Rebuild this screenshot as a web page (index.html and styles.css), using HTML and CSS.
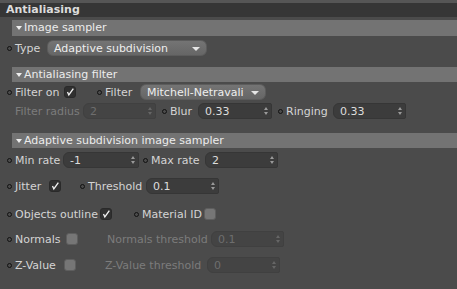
FILE: index.html
```html
<!DOCTYPE html>
<html lang="en">
<head>
  <meta charset="UTF-8" />
  <title>Antialiasing</title>
  <link rel="stylesheet" href="styles.css">
</head>
<body>
  <div class="panel">
    <div class="title">Antialiasing</div>

    <div class="group g-first"><span class="tri"></span>Image sampler</div>
    <div class="row r-type">
      <span class="param w40"><i class="dot"></i>Type</span>
      <span class="select w160">Adaptive subdivision<b class="arrow"></b></span>
    </div>

    <div class="group g-filter"><span class="tri"></span>Antialiasing filter</div>
    <div class="row r-filter">
      <span class="param w57"><i class="dot"></i>Filter on</span>
      <span class="check on"><svg viewBox="0 0 12 12"><path d="M3 6 L4.6 9.5 L10 2" /></svg></span>
      <span class="param w43 ml21"><i class="dot"></i>Filter</span>
      <span class="select w126">Mitchell-Netravali<b class="arrow"></b></span>
    </div>
    <div class="row r-radius">
      <span class="param w76 off"><i class="nodot"></i>Filter radius</span>
      <span class="field w73 dim">2<b class="spin"></b></span>
      <span class="param w36 ml6"><i class="dot"></i>Blur</span>
      <span class="field w74">0.33<b class="spin"></b></span>
      <span class="param w55 ml6"><i class="dot"></i>Ringing</span>
      <span class="field w73">0.33<b class="spin"></b></span>
    </div>

    <div class="group g-adaptive"><span class="tri"></span>Adaptive subdivision image sampler</div>
    <div class="row r-rate">
      <span class="param w56"><i class="dot"></i>Min rate</span>
      <span class="field w76">-1<b class="spin"></b></span>
      <span class="param w62 ml4"><i class="dot"></i>Max rate</span>
      <span class="field w73">2<b class="spin"></b></span>
    </div>
    <div class="row r-jitter">
      <span class="param w42"><i class="dot"></i>Jitter</span>
      <span class="check on"><svg viewBox="0 0 12 12"><path d="M3 6 L4.6 9.5 L10 2" /></svg></span>
      <span class="param w66 ml19"><i class="dot"></i>Threshold</span>
      <span class="field w73">0.1<b class="spin"></b></span>
    </div>
    <div class="row r-outline">
      <span class="param w93"><i class="dot"></i>Objects outline</span>
      <span class="check on"><svg viewBox="0 0 12 12"><path d="M3 6 L4.6 9.5 L10 2" /></svg></span>
      <span class="param w70 ml22"><i class="dot"></i>Material ID</span>
      <span class="check"></span>
    </div>
    <div class="row r-normals">
      <span class="param w59"><i class="dot"></i>Normals</span>
      <span class="check"></span>
      <span class="param w104 ml29 off">Normals threshold</span>
      <span class="field w73 dim">0.1<b class="spin"></b></span>
    </div>
    <div class="row r-zvalue">
      <span class="param w57"><i class="dot"></i>Z-Value</span>
      <span class="check"></span>
      <span class="param w102 ml29 off">Z-Value threshold</span>
      <span class="field w73 dim">0<b class="spin"></b></span>
    </div>
  </div>
</body>
</html>
```

FILE: styles.css
```css
body {
  margin: 0;
  background-color: #4b4b4b;
  font-family: 'DejaVu Sans', sans-serif;
  font-size: 11px;
  color: #d4d4d4;
}

.panel {
  width: 457px;
  height: 289px;
  box-sizing: border-box;
  background-color: #4b4b4b;
  border-top: 3px solid #565656;
}

.title {
  height: 14px;
  line-height: 14px;
  background-color: #363636;
  padding-left: 6px;
  font-weight: bold;
  color: #dcdcdc;
}

.group {
  height: 16px;
  line-height: 16px;
  margin-left: 12px;
  background-color: #737373;
  color: #ececec;
  display: flex;
  align-items: center;
}

.g-first { margin-top: 3px; }
.g-filter { margin-top: 11px; height: 15px; }
.g-adaptive { margin-top: 14px; height: 15px; }

.tri {
  width: 0;
  height: 0;
  margin: 0 2px 0 4px;
  border-left: 3px solid transparent;
  border-right: 3px solid transparent;
  border-top: 4px solid #eeeeee;
}

.row {
  height: 16px;
  padding-left: 7px;
  display: flex;
  align-items: center;
}

.r-type { margin-top: 4px; }
.r-filter { margin-top: 2px; }
.r-radius { margin-top: 3px; }
.r-rate { margin-top: 4px; }
.r-jitter { margin-top: 10px; }
.r-outline { margin-top: 12px; }
.r-normals { margin-top: 9px; }
.r-zvalue { margin-top: 10px; }

.param {
  display: flex;
  align-items: center;
  flex-shrink: 0;
  white-space: nowrap;
}

.param.off { color: #7c7c7c; }

.dot {
  width: 3px;
  height: 3px;
  border: 1px solid #111;
  border-radius: 50%;
  margin-right: 3px;
  flex-shrink: 0;
}

.nodot {
  width: 8px;
  flex-shrink: 0;
}

.select {
  position: relative;
  height: 16px;
  line-height: 16px;
  box-sizing: border-box;
  padding-left: 6px;
  border-radius: 6px;
  background: linear-gradient(#747474, #666666);
  border: 1px solid #5c5c5c;
  color: #eeeeee;
  white-space: nowrap;
  flex-shrink: 0;
}

.arrow {
  position: absolute;
  right: 6px;
  top: 6px;
  width: 0;
  height: 0;
  border-left: 4px solid transparent;
  border-right: 4px solid transparent;
  border-top: 4px solid #e6e6e6;
}

.field {
  position: relative;
  height: 16px;
  line-height: 15px;
  box-sizing: border-box;
  padding-left: 6px;
  border-radius: 6px 2px 2px 6px;
  background-color: #3c3c3c;
  border: 1px solid #363636;
  color: #dddddd;
  flex-shrink: 0;
}

.field.dim {
  background-color: #444444;
  border-color: #404040;
  color: #6e6e6e;
}

.spin {
  position: absolute;
  right: 3px;
  top: 3px;
  width: 0;
  height: 0;
  border-left: 2px solid transparent;
  border-right: 2px solid transparent;
  border-bottom: 3px solid #9a9a9a;
}

.spin::after {
  content: '';
  position: absolute;
  left: -2px;
  top: 5px;
  border-left: 2px solid transparent;
  border-right: 2px solid transparent;
  border-top: 3px solid #9a9a9a;
}

.field.dim .spin { border-bottom-color: #666; }
.field.dim .spin::after { border-top-color: #666; }

.check {
  width: 12px;
  height: 12px;
  box-sizing: border-box;
  border-radius: 3px;
  background-color: #767676;
  border: 1px solid #5e5e5e;
  flex-shrink: 0;
}

.check.on {
  background-color: #303030;
  border-color: #2a2a2a;
}

.check svg {
  display: block;
  width: 10px;
  height: 10px;
}

.check path {
  fill: none;
  stroke: #f0f0f0;
  stroke-width: 1.6;
}

.w36 { width: 36px; }
.w40 { width: 40px; }
.w42 { width: 42px; }
.w43 { width: 43px; }
.w55 { width: 55px; }
.w56 { width: 56px; }
.w57 { width: 57px; }
.w59 { width: 59px; }
.w62 { width: 62px; }
.w66 { width: 66px; }
.w70 { width: 70px; }
.w73 { width: 73px; }
.w74 { width: 74px; }
.w76 { width: 76px; }
.w93 { width: 93px; }
.w102 { width: 102px; }
.w104 { width: 104px; }
.w126 { width: 126px; }
.w160 { width: 160px; }

.ml4 { margin-left: 4px; }
.ml6 { margin-left: 6px; }
.ml19 { margin-left: 19px; }
.ml21 { margin-left: 21px; }
.ml22 { margin-left: 22px; }
.ml29 { margin-left: 29px; }
```
